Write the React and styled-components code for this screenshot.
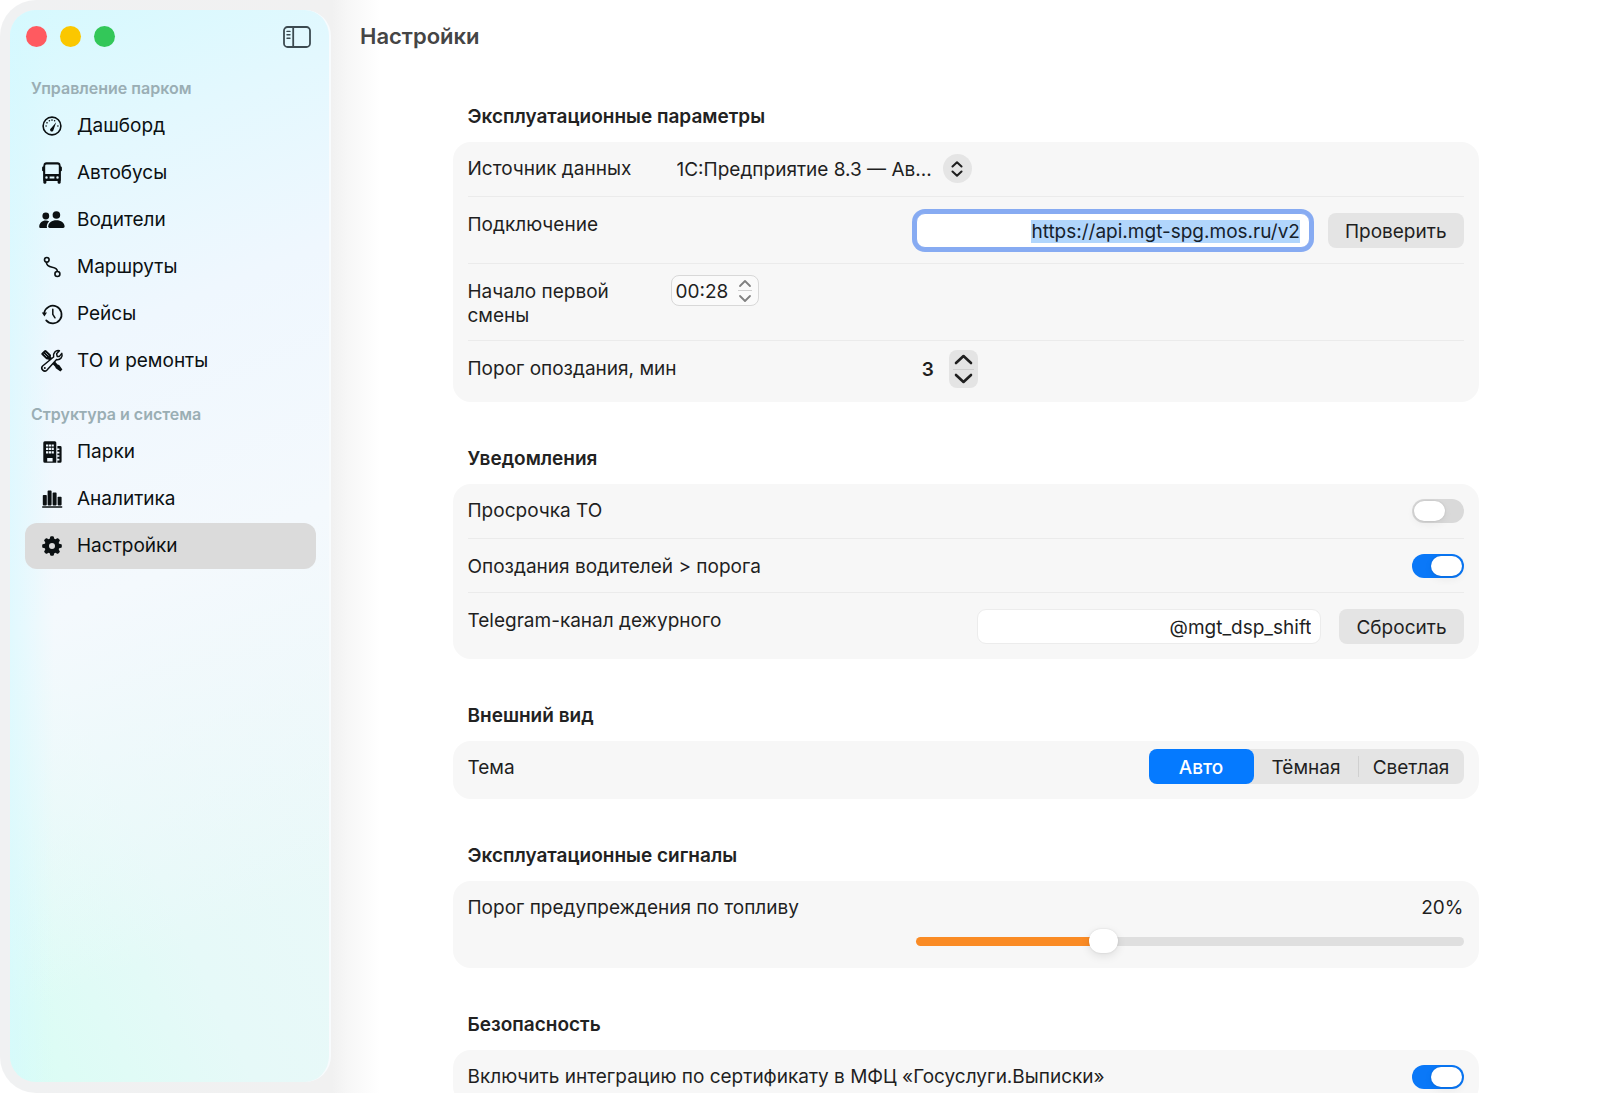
import React, { useEffect, useRef, useState } from "react";
import styled, { createGlobalStyle, css } from "styled-components";

const GlobalStyle = createGlobalStyle`
  *, *::before, *::after { box-sizing: border-box; }
  body {
    margin: 0;
    background: #ffffff;
    color: #1f1f1f;
    font: 400 19px/24px Inter, "Noto Sans", sans-serif;
  }
  button, input, select { font: inherit; color: inherit; margin: 0; }
`;

const Window = styled.div`
  display: flex;
  height: 100vh;
  overflow: hidden;
  border-radius: 36px 0 0 36px;
  background: linear-gradient(90deg, #f0f1f2 0, #f1f1f1 332px, #f7f7f7 348px, #ffffff 380px);
`;

const Sidebar = styled.aside`
  flex: 0 0 321px;
  margin: 10px 0 11px 10px;
  padding: 16px 13px 16px 15px;
  border-radius: 26px;
  border-right: 2px solid #f8fbfd;
  background:
    linear-gradient(90deg, rgba(212, 249, 255, 0.6) 0, rgba(218, 250, 255, 0) 44px),
    linear-gradient(158deg, #d6f9fe 0%, #e3f8fe 14%, #eff7fe 30%, #f4f9fd 52%, rgba(244, 250, 252, 0) 84%),
    linear-gradient(65deg, #dafdf4 0%, #e6f9f8 30%, #f0f8fa 100%);
`;

const TitleBar = styled.div`
  display: flex;
  align-items: center;
  gap: 13px;
  height: 21px;
  padding: 0 5px 0 1px;
`;

const WindowButton = styled.button`
  width: 21px;
  height: 21px;
  padding: 0;
  border: 0;
  border-radius: 50%;
  background: ${(p) => p.$color};
`;

const PanelButton = styled.button`
  display: flex;
  margin-left: auto;
  padding: 0;
  border: 0;
  background: none;
  color: #3c4a50;
`;

const NavHeading = styled.h2`
  margin: ${(p) => p.$top}px 0 0;
  padding-left: 6px;
  font-size: 16px;
  line-height: 24px;
  font-weight: 600;
  color: #9aaeb4;
`;

const NavList = styled.ul`
  display: flex;
  flex-direction: column;
  gap: 1px;
  margin: 3px 0 0;
  padding: 0;
  list-style: none;
`;

const NavLink = styled.a`
  display: flex;
  align-items: center;
  gap: 12px;
  height: 46px;
  padding: 0 14px;
  border-radius: 12px;
  color: #0b1012;
  text-decoration: none;
  background: ${(p) => (p.$active ? "#dbdbdb" : "transparent")};
`;

const Main = styled.main`
  flex: 1;
  min-width: 0;
  overflow: hidden;
`;

const PageTitle = styled.h1`
  margin: 0;
  padding: 20px 29px 0;
  font-size: 22px;
  line-height: 32px;
  font-weight: 600;
  color: #454545;
`;

const Content = styled.div`
  display: flex;
  flex-direction: column;
  gap: 45px;
  max-width: 1026px;
  margin: 53px auto 0;
`;

const SectionTitle = styled.h2`
  margin: 0 0 13px;
  padding: 0 15px;
  font-size: 19px;
  line-height: 24px;
  font-weight: 600;
  color: #222222;
`;

const Card = styled.div`
  padding: 0 15px;
  border-radius: 18px;
  background: #f7f7f7;
`;

const labelWidths = { narrow: "203px", half: "45%", auto: "auto" };

const Label = styled.label`
  flex: 0 0 ${(p) => labelWidths[p.$size || "auto"]};
  padding: 15px 16px 13px 0;
`;

const Row = styled.div`
  display: flex;
  align-items: flex-start;
  min-height: 54px;

  & + & {
    border-top: 1px solid #ebebeb;
  }
  & + & > ${Label} {
    padding-top: 16px;
    padding-bottom: 12px;
  }
`;

const Controls = styled.div`
  display: flex;
  align-items: center;
  flex: 1;
  justify-content: ${(p) => (p.$start ? "flex-start" : "flex-end")};
  gap: ${(p) => p.$gap || 18}px;
  padding: ${(p) => p.$top}px 0 ${(p) => p.$bottom || 14}px;
`;

const Picker = styled.div`
  position: relative;
`;

const PickerSelect = styled.select`
  appearance: none;
  display: block;
  width: 301px;
  height: 29px;
  padding: 2px 40px 0 6px;
  border: 0;
  background: none;
`;

const PickerKnob = styled.span`
  position: absolute;
  top: 0;
  right: 0;
  display: flex;
  align-items: center;
  justify-content: center;
  width: 29px;
  height: 29px;
  border-radius: 50%;
  background: #e5e5e5;
  pointer-events: none;
`;

const TextField = styled.input`
  height: 35px;
  padding: 2px 9px 0;
  border: 1px solid #ececec;
  border-radius: 9px;
  background: #ffffff;
  text-align: right;
  outline: none;
  ${(p) => (p.$grow ? css`flex: 1; min-width: 0;` : css`width: 344px;`)}

  &:focus {
    border-color: #87abf2;
    box-shadow: 0 0 0 4px #87abf2;
  }
  &::selection {
    background: #b1d6fc;
    color: #16222c;
  }
`;

const PushButton = styled.button`
  height: 35px;
  padding: 2px 17px 0;
  border: 0;
  border-radius: 8px;
  background: #e4e4e4;
`;

const TimeField = styled.div`
  display: flex;
  align-items: center;
  justify-content: space-between;
  width: 88px;
  height: 31px;
  padding: 0 6px 0 4px;
  border: 1px solid #d8d8d8;
  border-radius: 8px;
  background: #fafafa;
`;

const TimeInput = styled.input`
  width: 56px;
  padding: 2px 0 0;
  border: 0;
  background: none;
  outline: none;
`;

const StepColumn = styled.div`
  display: flex;
  flex-direction: column;
  height: 29px;
  color: ${(p) => (p.$solid ? "#1f1f1f" : "#808080")};
  ${(p) => p.$solid && css`
    width: 29px;
    height: 38px;
    padding: 0 4px;
    border-radius: 8px;
    background: #e4e4e4;
  `}
`;

const StepButton = styled.button`
  display: flex;
  flex: 1;
  align-items: center;
  justify-content: center;
  padding: 0;
  border: 0;
  background: none;

  & + & { border-top: 1px solid #d0d0d0; }
`;

const CountInput = styled.input`
  width: 24px;
  padding: 2px 0 0 6px;
  border: 0;
  background: none;
  font-weight: 600;
  outline: none;
`;

const Switch = styled.input`
  appearance: none;
  display: flex;
  align-items: center;
  width: 52px;
  height: 24px;
  padding: 0 2px;
  border-radius: 12px;
  background: #d9d9d9;

  &::before {
    content: "";
    width: 31px;
    height: 20px;
    border-radius: 10px;
    background: #ffffff;
    box-shadow: 0 0 2px rgba(0, 0, 0, 0.15), 0 3px 8px rgba(0, 0, 0, 0.06);
  }
  &:checked { background: #0a78f8; }
  &:checked::before { margin-left: auto; }
`;

const Segments = styled.div`
  display: flex;
  height: 35px;
  border-radius: 8px;
  background: #e4e4e4;
`;

const SegmentButton = styled.button`
  display: flex;
  align-items: center;
  justify-content: center;
  width: 105px;
  padding: 2px 0 0;
  border: 0;
  border-radius: 8px;
  background: ${(p) => (p.$active ? "#057aff" : "transparent")};
  color: ${(p) => (p.$active ? "#ffffff" : "#1f1f1f")};
  font-weight: ${(p) => (p.$active ? 500 : 400)};
`;

const SegmentDivider = styled.span`
  align-self: center;
  width: 1px;
  height: 21px;
  margin-left: -1px;
  background: #d0d0d0;
`;

const SliderControls = styled.div`
  display: flex;
  flex-direction: column;
  flex: 1;
  gap: 9px;
  padding: 15px 0 15px;
  text-align: right;
`;

const Slider = styled.input`
  appearance: none;
  display: block;
  width: 100%;
  height: 24px;
  background: none;
  outline: none;

  &::-webkit-slider-runnable-track {
    height: 9px;
    border-radius: 5px;
    background: linear-gradient(90deg, #fa8b25 var(--fill), #dfdfdf var(--fill));
  }
  &::-webkit-slider-thumb {
    appearance: none;
    width: 29px;
    height: 24px;
    margin-top: -8px;
    border-radius: 12px;
    background: #ffffff;
    box-shadow: 0 0 2px rgba(0, 0, 0, 0.12), 0 3px 10px rgba(0, 0, 0, 0.1);
  }
`;

const Chevron = ({ up, width, height, stroke }) => (
  <svg width={width} height={height} viewBox={`0 0 ${width} ${height}`} fill="none" stroke="currentColor" strokeWidth={stroke} strokeLinecap="round" strokeLinejoin="round" aria-hidden="true">
    <path d={up ? `M2 ${height - 2}L${width / 2} 2L${width - 2} ${height - 2}` : `M2 2L${width / 2} ${height - 2}L${width - 2} 2`} />
  </svg>
);

const Icon = ({ children }) => (
  <svg width="26" height="26" viewBox="-13 -13 26 26" fill="currentColor" aria-hidden="true">{children}</svg>
);

const icons = {
  gauge: (
    <Icon>
      <circle r="8.9" fill="none" stroke="currentColor" strokeWidth="1.6" />
      {[180, 212, 244, 270, 296, 360].map((a) => (
        <circle key={a} cx={5.9 * Math.cos((a * Math.PI) / 180)} cy={5.9 * Math.sin((a * Math.PI) / 180)} r="0.8" />
      ))}
      <path d="M4.2-3.8L1.4 4.2A1.7 1.7 0 1 1-1.2 2.4Z" />
    </Icon>
  ),
  bus: (
    <Icon>
      <path fillRule="evenodd" d="M-5.6-10.7H5.6Q8.3-10.7 8.5-8L8.8-6.6Q9.9-6.5 9.9-5.5V-2.8Q9.9-1.9 8.9-1.8V7.6L8.7 8V9.6Q8.7 10.7 7.6 10.7H6.7Q5.6 10.7 5.6 9.6V8H-5.6V9.6Q-5.6 10.7-6.7 10.7H-7.6Q-8.7 10.7-8.7 9.6V8L-8.9 7.6V-1.8Q-9.9-1.9-9.9-2.8V-5.5Q-9.9-6.5-8.8-6.6L-8.5-8Q-8.3-10.7-5.6-10.7ZM-5.4-8.6Q-6.7-8.6-6.8-7.4V1H6.8V-7.4Q6.7-8.6 5.4-8.6ZM-5.5 3.2A1.2 1.2 0 1 0-5.5 5.7A1.2 1.2 0 1 0-5.5 3.2ZM-2.4 3.6V5.4H2.4V3.6ZM5.5 3.2A1.2 1.2 0 1 0 5.5 5.7A1.2 1.2 0 1 0 5.5 3.2Z" />
    </Icon>
  ),
  people: (
    <Icon>
      <circle cx="-6.2" cy="-4" r="3.4" />
      <circle cx="4.4" cy="-5" r="3.8" />
      <path d="M-12.8 6.8C-12.8 3-10 0.5-6.2 0.5C-4.9 0.5-3.7 0.8-2.8 1.4C-4.8 3-5.6 5.3-5 8H-11.6Q-12.8 8-12.8 6.8Z" />
      <path d="M-3.8 6.6C-3.8 2.8-0.2 0.2 4.4 0.2C9 0.2 12.6 2.8 12.6 6.6Q12.6 8 11.2 8H-2.4Q-3.8 8-3.8 6.6Z" />
    </Icon>
  ),
  route: (
    <Icon>
      <g fill="none" stroke="currentColor" strokeWidth="1.6">
        <circle cx="-5.2" cy="-7.2" r="2.3" />
        <circle cx="5.4" cy="7" r="2.5" />
        <path d="M-5.6-4.8C-5.6 2.6 5.4-2 5.4 4.4" />
      </g>
    </Icon>
  ),
  clock: (
    <Icon>
      <g fill="none" stroke="currentColor" strokeWidth="1.7" strokeLinecap="round" strokeLinejoin="round">
        <path d="M-7.8-1.4A8.8 8.8 0 1 1-5.8 6.4" />
        <path d="M0.8-4.8V0.4L3 3.8" strokeWidth="1.5" />
      </g>
      <path d="M-10.2-1.4H-5L-7.6 2.6Z" />
    </Icon>
  ),
  tools: (
    <Icon>
      <path d="M-9.8-8.6L-7.4-10.8Q-6.6-11.3-5.6-10.6L-1.4-6.4Q-0.6-5.4-1.2-4.2L5.6 3.4L7.2 4L10.4 8.4L8.4 10.6L3.8 7.2L3.2 5.8L-4-1.8Q-5.2-1.2-6.2-2.2L-10.6-6.4Q-11.2-7.6-9.8-8.6Z" />
      <path d="M-8.2-7.2L-5-4M-6.6-8.6L-3.4-5.4" stroke="#c9d8dc" strokeWidth="0.7" />
      <path d="M9.8-7.6C11-4.2 8.4-0.8 4.6-1.4L-5.2 9.2C-7.8 11.8-12 7.8-9.4 5L1.6-4C0.8-7.8 3.8-11.2 7.4-10.2L4.6-7.2L5.2-4.6L7.2-4.4Z" fill="#f0f8fe" stroke="currentColor" strokeWidth="1.5" strokeLinejoin="round" />
      <circle cx="-7.2" cy="7" r="1" />
    </Icon>
  ),
  building: (
    <Icon>
      <path fillRule="evenodd" d="M-7.2-10.7H2.8Q4.3-10.7 4.3-9.2V10.7H-7.2Q-8.7 10.7-8.7 9.2V-9.2Q-8.7-10.7-7.2-10.7ZM-6-7.6V-5.4H-3.8V-7.6ZM-3.2-7.6V-5.4H-1V-7.6ZM-0.4-7.6V-5.4H1.8V-7.6ZM-6-4.2V-2H-3.8V-4.2ZM-3.2-4.2V-2H-1V-4.2ZM-0.4-4.2V-2H1.8V-4.2ZM-6-0.8V1.4H-3.8V-0.8ZM-3.2-0.8V1.4H-1V-0.8ZM-0.4-0.8V1.4H1.8V-0.8ZM-4.8 6V9.4H0.6V6Z" />
      <path d="M5.4-6H8.2Q9.6-6 9.6-4.6V9.2Q9.6 10.7 8.2 10.7H5.4V8.4H7.4V6.8H5.4V4.8H7.4V3.2H5.4V1.4H7.4V-0.2H5.4V-2H7.4V-3.6H5.4Z" />
    </Icon>
  ),
  chart: (
    <Icon>
      <rect x="-9.2" y="-4" width="4" height="10.4" rx="0.8" />
      <rect x="-4.4" y="-8.4" width="4" height="14.8" rx="0.8" />
      <rect x="0.6" y="-6.4" width="4" height="12.8" rx="0.8" />
      <rect x="5.6" y="-2.2" width="4" height="8.6" rx="0.8" />
      <rect x="-10" y="7.2" width="20.4" height="1.5" rx="0.7" />
    </Icon>
  ),
  gear: (
    <Icon>
      <circle r="5.2" fill="none" stroke="currentColor" strokeWidth="4.4" />
      {[0, 45, 90, 135, 180, 225, 270, 315].map((a) => (
        <path key={a} transform={`rotate(${a})`} d="M-2.5-6.4L-1.8-9.1Q-1.6-9.8-0.9-9.8H0.9Q1.6-9.8 1.8-9.1L2.5-6.4Z" />
      ))}
    </Icon>
  ),
};

const navGroups = [
  {
    title: "Управление парком",
    top: 29,
    items: [
      ["gauge", "Дашборд"],
      ["bus", "Автобусы"],
      ["people", "Водители"],
      ["route", "Маршруты"],
      ["clock", "Рейсы"],
      ["tools", "ТО и ремонты"],
    ],
  },
  {
    title: "Структура и система",
    top: 18,
    items: [
      ["building", "Парки"],
      ["chart", "Аналитика"],
      ["gear", "Настройки"],
    ],
  },
];

const themes = ["Авто", "Тёмная", "Светлая"];

const Section = ({ title, children }) => (
  <section>
    <SectionTitle>{title}</SectionTitle>
    <Card>{children}</Card>
  </section>
);

const SwitchRow = ({ id, label, checked }) => (
  <Row>
    <Label htmlFor={id}>{label}</Label>
    <Controls $top={15}>
      <Switch id={id} type="checkbox" defaultChecked={checked} />
    </Controls>
  </Row>
);

export default function App() {
  const urlRef = useRef(null);
  const [theme, setTheme] = useState("Авто");
  const [delay, setDelay] = useState(3);
  const [fuel, setFuel] = useState(20);

  useEffect(() => {
    urlRef.current.focus();
    urlRef.current.select();
  }, []);

  return (
    <>
      <GlobalStyle />
      <Window>
        <Sidebar>
          <TitleBar>
            <WindowButton $color="#ff5a60" aria-label="Закрыть" />
            <WindowButton $color="#fbc700" aria-label="Свернуть" />
            <WindowButton $color="#33c759" aria-label="Развернуть" />
            <PanelButton aria-label="Боковая панель">
              <svg width="28" height="22" viewBox="0 0 28 22" fill="none" stroke="currentColor" strokeWidth="1.8" strokeLinecap="round" aria-hidden="true">
                <rect x="1" y="1" width="26" height="20" rx="3.6" />
                <path d="M10.2 1V21" />
                <path d="M4 5.4H7M4 8.8H7M4 12.2H7" strokeWidth="1.4" />
              </svg>
            </PanelButton>
          </TitleBar>
          <nav>
            {navGroups.map((group) => (
              <React.Fragment key={group.title}>
                <NavHeading $top={group.top}>{group.title}</NavHeading>
                <NavList>
                  {group.items.map(([icon, label]) => (
                    <li key={label}>
                      <NavLink href="#" $active={icon === "gear"}>
                        {icons[icon]}
                        {label}
                      </NavLink>
                    </li>
                  ))}
                </NavList>
              </React.Fragment>
            ))}
          </nav>
        </Sidebar>

        <Main>
          <PageTitle>Настройки</PageTitle>
          <Content>
            <Section title="Эксплуатационные параметры">
              <Row>
                <Label htmlFor="source" $size="narrow">Источник данных</Label>
                <Controls $start $top={12} $bottom={13}>
                  <Picker>
                    <PickerSelect id="source">
                      <option>1С:Предприятие 8.3 — Ав...</option>
                    </PickerSelect>
                    <PickerKnob>
                      <svg width="12" height="16" viewBox="0 0 12 16" fill="none" stroke="#1f1f1f" strokeWidth="2" strokeLinecap="round" strokeLinejoin="round" aria-hidden="true">
                        <path d="M1.5 5.5L6 1.2L10.5 5.5M1.5 10.5L6 14.8L10.5 10.5" />
                      </svg>
                    </PickerKnob>
                  </Picker>
                </Controls>
              </Row>
              <Row>
                <Label htmlFor="url" $size="half">Подключение</Label>
                <Controls $top={16} $bottom={15}>
                  <TextField id="url" ref={urlRef} $grow defaultValue="https://api.mgt-spg.mos.ru/v2" spellCheck={false} />
                  <PushButton>Проверить</PushButton>
                </Controls>
              </Row>
              <Row>
                <Label htmlFor="shift" $size="narrow">Начало первой смены</Label>
                <Controls $start $top={11}>
                  <TimeField>
                    <TimeInput id="shift" defaultValue="00:28" />
                    <StepColumn>
                      <StepButton aria-label="Позже"><Chevron up width={14} height={9} stroke={1.8} /></StepButton>
                      <StepButton aria-label="Раньше"><Chevron width={14} height={9} stroke={1.8} /></StepButton>
                    </StepColumn>
                  </TimeField>
                </Controls>
              </Row>
              <Row>
                <Label htmlFor="delay" $size="half">Порог опоздания, мин</Label>
                <Controls $start $gap={9} $top={9}>
                  <CountInput id="delay" value={delay} readOnly />
                  <StepColumn $solid>
                    <StepButton aria-label="Больше" onClick={() => setDelay(delay + 1)}><Chevron up width={19} height={11} stroke={2.6} /></StepButton>
                    <StepButton aria-label="Меньше" onClick={() => setDelay(delay - 1)}><Chevron width={19} height={11} stroke={2.6} /></StepButton>
                  </StepColumn>
                </Controls>
              </Row>
            </Section>

            <Section title="Уведомления">
              <SwitchRow id="overdue" label="Просрочка ТО" checked={false} />
              <SwitchRow id="late" label="Опоздания водителей > порога" checked />
              <Row>
                <Label htmlFor="telegram">Telegram-канал дежурного</Label>
                <Controls $top={16} $bottom={15}>
                  <TextField id="telegram" defaultValue="@mgt_dsp_shift" spellCheck={false} />
                  <PushButton>Сбросить</PushButton>
                </Controls>
              </Row>
            </Section>

            <Section title="Внешний вид">
              <Row>
                <Label as="span" id="theme">Тема</Label>
                <Controls $top={8} $bottom={15}>
                  <Segments role="group" aria-labelledby="theme">
                    {themes.map((name, i) => (
                      <React.Fragment key={name}>
                        {i > 0 && theme !== name && theme !== themes[i - 1] && <SegmentDivider />}
                        <SegmentButton $active={theme === name} aria-pressed={theme === name} onClick={() => setTheme(name)}>{name}</SegmentButton>
                      </React.Fragment>
                    ))}
                  </Segments>
                </Controls>
              </Row>
            </Section>

            <Section title="Эксплуатационные сигналы">
              <Row>
                <Label htmlFor="fuel" $size="half">Порог предупреждения по топливу</Label>
                <SliderControls>
                  <span>{fuel}%</span>
                  <Slider
                    id="fuel"
                    type="range"
                    min="0"
                    max="60"
                    value={fuel}
                    onChange={(e) => setFuel(Number(e.target.value))}
                    style={{ "--fill": `${(fuel / 60) * 100}%` }}
                  />
                </SliderControls>
              </Row>
            </Section>

            <Section title="Безопасность">
              <SwitchRow id="gosuslugi" label="Включить интеграцию по сертификату в МФЦ «Госуслуги.Выписки»" checked />
            </Section>
          </Content>
        </Main>
      </Window>
    </>
  );
}
